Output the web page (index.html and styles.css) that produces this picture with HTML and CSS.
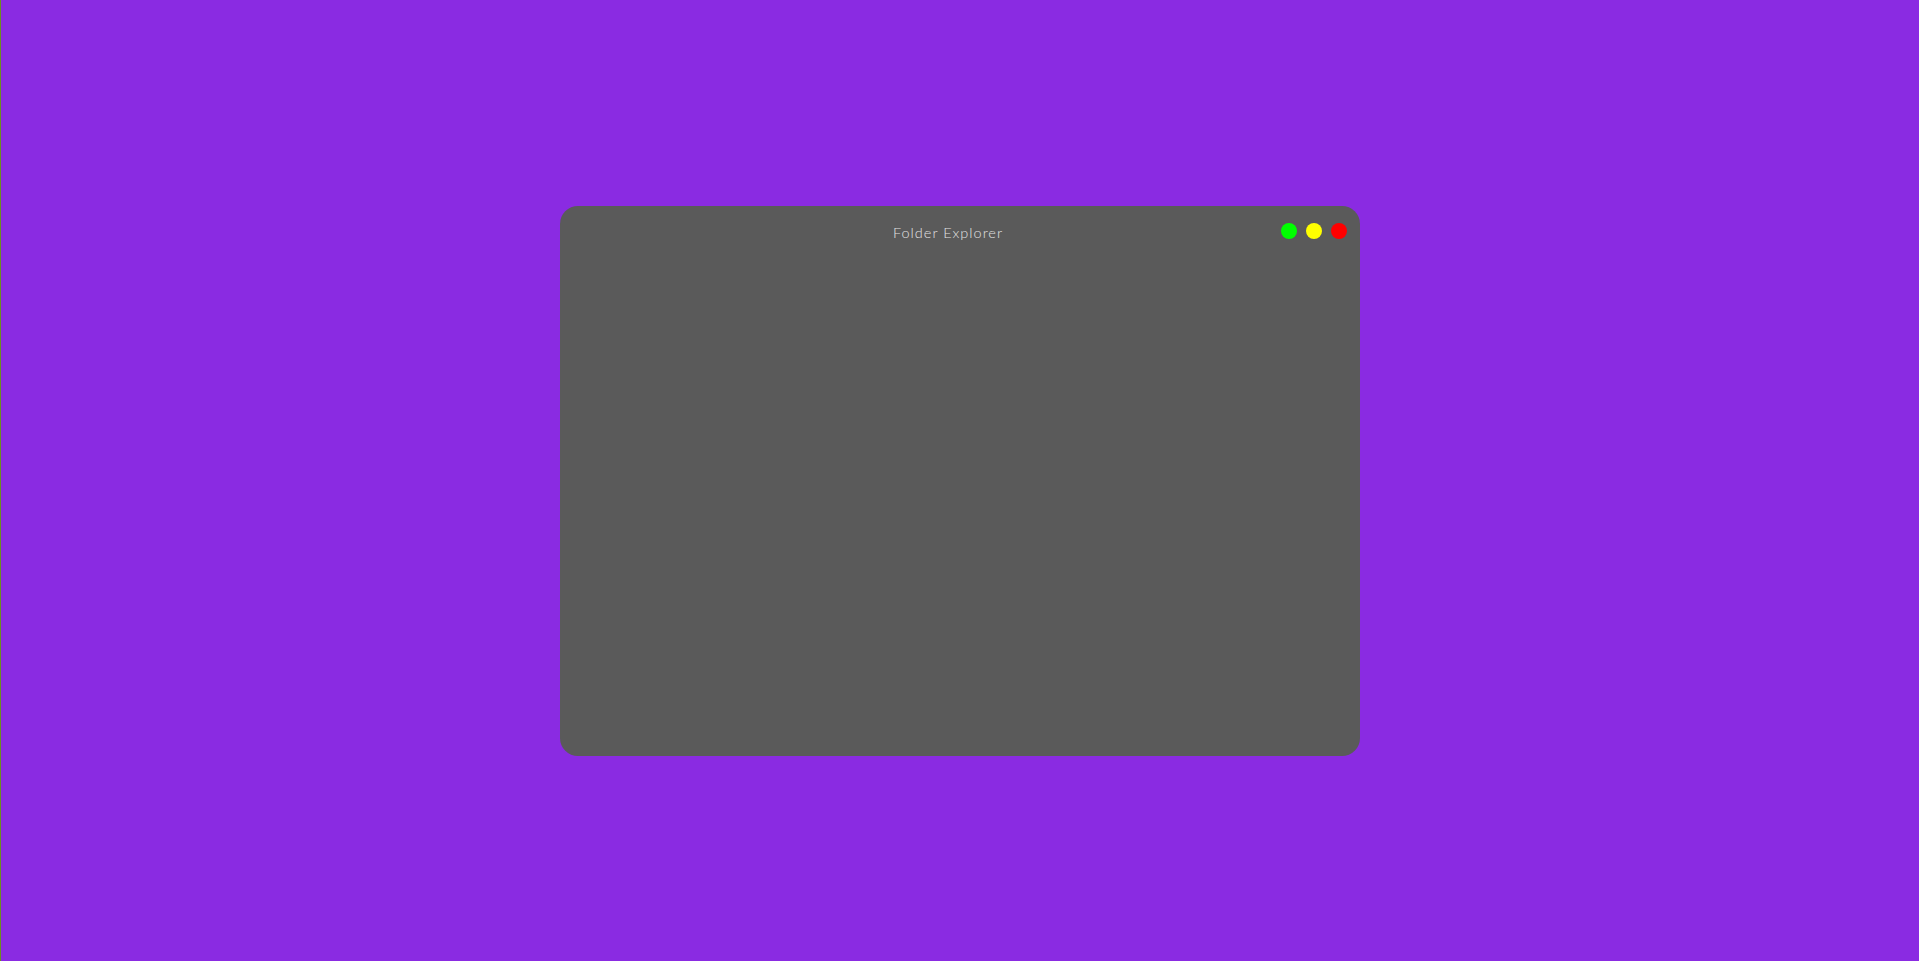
FILE: index.html
```html
<!DOCTYPE html>
<html lang="en">
<head>
<meta charset="utf-8">
<title>Folder Explorer</title>
<link rel="stylesheet" href="styles.css">
</head>
<body>
  <main class="desktop">
    <section class="window">
      <header class="titlebar">
        <div class="title">Folder Explorer</div>
        <div class="controls">
          <span class="dot dot-green"></span>
          <span class="dot dot-yellow"></span>
          <span class="dot dot-red"></span>
        </div>
      </header>
      <div class="content"></div>
    </section>
  </main>
</body>
</html>
```
FILE: styles.css
```css
html, body {
  margin: 0;
  padding: 0;
  height: 100%;
}
body {
  background: #8a2be2;
  border-left: 1px solid #6b8e23;
  box-sizing: border-box;
  font-family: Lato, "Open Sans", sans-serif;
}
.desktop {
  height: 100%;
  display: flex;
  align-items: center;
  justify-content: center;
}
.window {
  width: 800px;
  height: 550px;
  background: #5a5a5a;
  border-radius: 18px;
  display: flex;
  flex-direction: column;
}
.titlebar {
  display: grid;
  height: 50px;
  align-items: center;
}
.title,
.controls {
  grid-area: 1 / 1;
}
.title {
  text-align: center;
  padding-right: 24px;
  padding-top: 3px;
  color: #e2e2e2;
  font-size: 14.5px;
  font-weight: 300;
  letter-spacing: 1px;
}
.controls {
  justify-self: end;
  display: flex;
  gap: 9px;
  padding-right: 13px;
}
.dot {
  width: 16px;
  height: 16px;
  border-radius: 50%;
}
.dot-green { background: #00ff00; }
.dot-yellow { background: #ffff00; }
.dot-red { background: #ff0000; }
.content {
  flex: 1;
}
```
